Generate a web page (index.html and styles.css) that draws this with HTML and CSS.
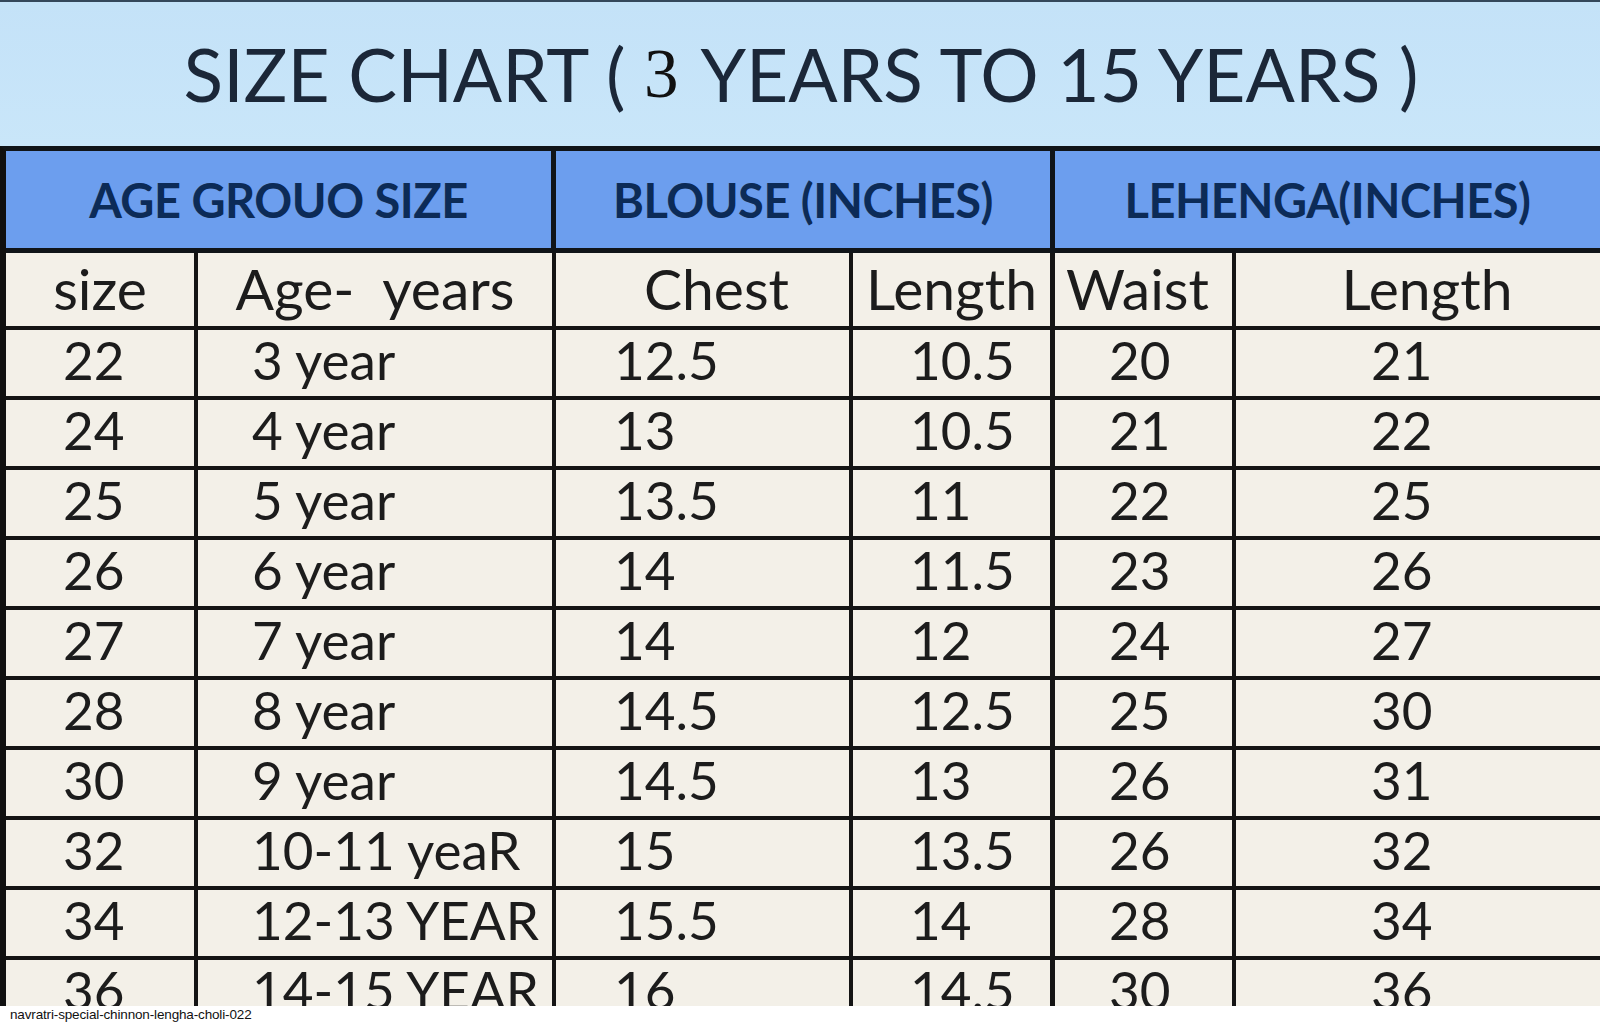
FILE: index.html
```html
<!DOCTYPE html>
<html lang="en">
<head>
<meta charset="utf-8">
<title>Size Chart</title>
<link rel="stylesheet" href="styles.css">
</head>
<body>
<div class="page">
  <div class="chart">
    <div class="title">SIZE CHART ( <span class="three">3</span> YEARS TO 15 YEARS )</div>
    <div class="grid">
      <div class="hd g1">AGE GROUO SIZE</div>
      <div class="hd g2">BLOUSE (INCHES)</div>
      <div class="hd g3">LEHENGA(INCHES)</div>

      <div class="sh c1">size</div>
      <div class="sh c2">Age-&nbsp; years</div>
      <div class="sh c3">Chest</div>
      <div class="sh c4">Length</div>
      <div class="sh c5">Waist</div>
      <div class="sh c6">Length</div>

      <div class="td c1">22</div><div class="td c2">3 year</div><div class="td c3">12.5</div><div class="td c4">10.5</div><div class="td c5">20</div><div class="td c6">21</div>
      <div class="td c1">24</div><div class="td c2">4 year</div><div class="td c3">13</div><div class="td c4">10.5</div><div class="td c5">21</div><div class="td c6">22</div>
      <div class="td c1">25</div><div class="td c2">5 year</div><div class="td c3">13.5</div><div class="td c4">11</div><div class="td c5">22</div><div class="td c6">25</div>
      <div class="td c1">26</div><div class="td c2">6 year</div><div class="td c3">14</div><div class="td c4">11.5</div><div class="td c5">23</div><div class="td c6">26</div>
      <div class="td c1">27</div><div class="td c2">7 year</div><div class="td c3">14</div><div class="td c4">12</div><div class="td c5">24</div><div class="td c6">27</div>
      <div class="td c1">28</div><div class="td c2">8 year</div><div class="td c3">14.5</div><div class="td c4">12.5</div><div class="td c5">25</div><div class="td c6">30</div>
      <div class="td c1">30</div><div class="td c2">9 year</div><div class="td c3">14.5</div><div class="td c4">13</div><div class="td c5">26</div><div class="td c6">31</div>
      <div class="td c1">32</div><div class="td c2">10-11 yeaR</div><div class="td c3">15</div><div class="td c4">13.5</div><div class="td c5">26</div><div class="td c6">32</div>
      <div class="td c1">34</div><div class="td c2">12-13 YEAR</div><div class="td c3">15.5</div><div class="td c4">14</div><div class="td c5">28</div><div class="td c6">34</div>
      <div class="td c1">36</div><div class="td c2">14-15 YEAR</div><div class="td c3">16</div><div class="td c4">14.5</div><div class="td c5">30</div><div class="td c6">36</div>
    </div>
  </div>
  <div class="caption">navratri-special-chinnon-lengha-choli-022</div>
</div>
</body>
</html>
```
FILE: styles.css
```css
* { box-sizing: border-box; }

html, body {
  margin: 0;
  padding: 0;
  background: #ffffff;
}

.page {
  width: 1600px;
}

.chart {
  height: 1006px;
  overflow: hidden;
  background: #f3f0e8;
}

.title {
  height: 146px;
  border-top: 2px solid #34475a;
  background: linear-gradient(#c4e2f8, #c9e6f9);
  display: flex;
  align-items: center;
  justify-content: center;
  padding-left: 2px;
  font-family: Lato, "Liberation Sans", sans-serif;
  font-size: 73px;
  color: #1b2738;
  white-space: pre;
}

.three {
  font-family: "Liberation Serif", serif;
  font-size: 69px;
  color: #111;
  margin-right: 6px;
}

.grid {
  display: grid;
  grid-template-columns: 192px 358px 297px 202px 181px 1fr;
  grid-template-rows: 102px 77px;
  grid-auto-rows: 70px;
  border-top: 5px solid #101418;
  border-left: 6px solid #101010;
  font-family: Lato, "Liberation Sans", sans-serif;
  color: #1c1c1c;
}

.hd {
  grid-column: span 2;
  background: #6c9eee;
  border-bottom: 5px solid #101418;
  border-right: 5px solid #101418;
  display: flex;
  align-items: center;
  justify-content: center;
  font-size: 47px;
  font-weight: 700;
  color: #0c2b57;
  letter-spacing: -0.5px;
}

.hd.g3 { border-right: 0; }

.sh, .td {
  background: #f3f0e8;
  border-bottom: 4px solid #141414;
  border-right: 4px solid #141414;
  display: flex;
  align-items: center;
}

.sh {
  justify-content: center;
  font-size: 57px;
  padding-bottom: 4px;
}

.td {
  font-size: 53px;
  padding-bottom: 8px;
}

.c4 { border-right-width: 5px; }
.c6 { border-right: 0; }

.sh.c3 { padding-left: 28px; }
.sh.c5 { padding-right: 12px; }
.sh.c6 { padding-left: 18px; }

.td.c1 { padding-left: 57px; }
.td.c2 { padding-left: 54px; }
.td.c3 { padding-left: 58px; }
.td.c4 { padding-left: 57px; }
.td.c5 { padding-left: 54px; }
.td.c6 { padding-left: 135px; }

.caption {
  padding: 1px 0 0 10px;
  font-family: "Liberation Sans", Arial, sans-serif;
  font-size: 13.5px;
  color: #111;
  letter-spacing: -0.15px;
}
```
